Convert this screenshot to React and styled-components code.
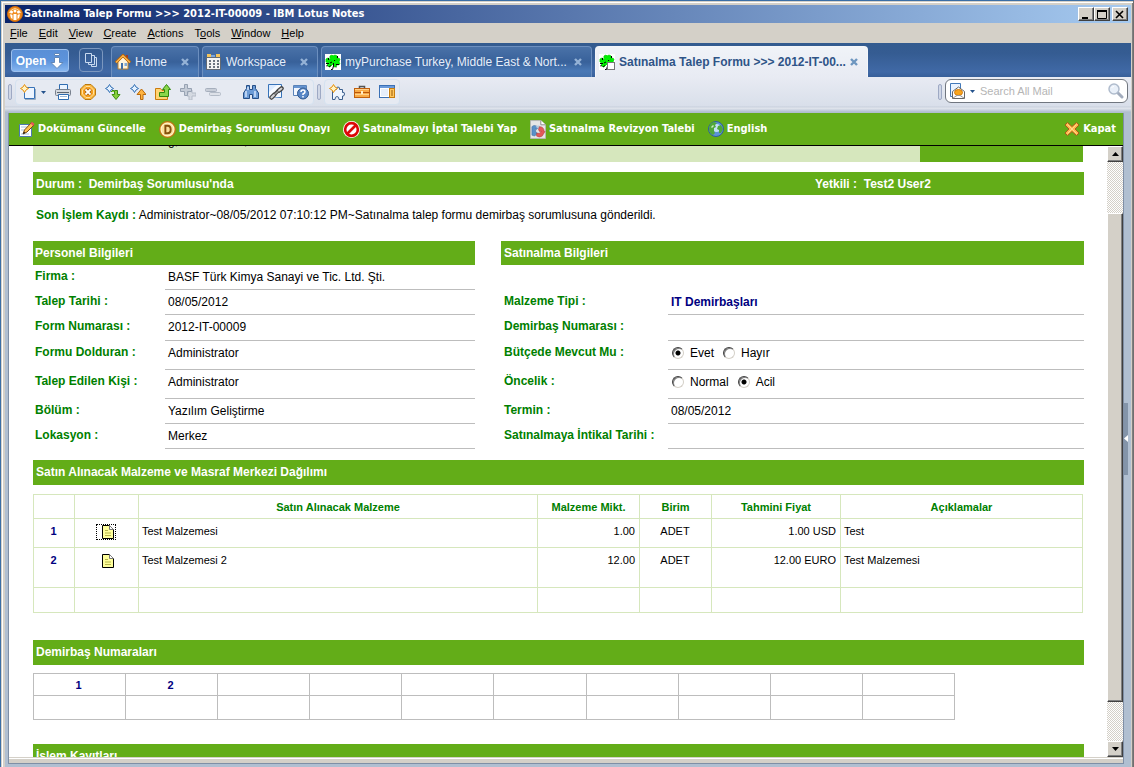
import { useState } from "react";
import styled, { createGlobalStyle, css } from "styled-components";

const materials = [
	{ no: 1, name: "Test Malzemesi", amount: "1.00", unit: "ADET", price: "1.00 USD", note: "Test" },
	{ no: 2, name: "Test Malzemesi 2", amount: "12.00", unit: "ADET", price: "12.00 EURO", note: "Test Malzemesi" },
];

const personnel = [
	["Firma :", "BASF Türk Kimya Sanayi ve Tic. Ltd. Şti.", 25],
	["Talep Tarihi :", "08/05/2012", 25],
	["Form Numarası :", "2012-IT-00009", 26],
	["Formu Dolduran :", "Administrator", 29],
	["Talep Edilen Kişi :", "Administrator", 29],
	["Bölüm :", "Yazılım Geliştirme", 25],
	["Lokasyon :", "Merkez", 25],
];

const menus = [
	["", "F", "ile"],
	["", "E", "dit"],
	["", "V", "iew"],
	["", "C", "reate"],
	["", "A", "ctions"],
	["T", "o", "ols"],
	["", "W", "indow"],
	["", "H", "elp"],
];

function Icon({ size = 16, children }) {
	return (
		<svg width={size} height={size} viewBox="0 0 16 16" aria-hidden="true">
			{children}
		</svg>
	);
}

const Sparkle = ({ x = 0, y = 0, fill = "#fff3c4", stroke = "#e8920c" }) => (
	<path
		d={`M${x + 4.5} ${y + 0.5}L${x + 6} ${y + 3}L${x + 8.5} ${y + 4.5}L${x + 6} ${y + 6}L${x + 4.5} ${y + 8.5}L${x + 3} ${y + 6}L${x + 0.5} ${y + 4.5}L${x + 3} ${y + 3}Z`}
		fill={fill}
		stroke={stroke}
	/>
);

const NotesLogo = () => (
	<Icon>
		<circle cx="8" cy="8" r="7.5" fill="#f08a1c" stroke="#c96a10" />
		<path d="M2 7Q4 3 8 2.500Q12 3 14 7" fill="none" stroke="#ffd79a" />
		<circle cx="4.500" cy="6" r="1.500" fill="#fff" />
		<circle cx="8" cy="5" r="1.500" fill="#fff" />
		<circle cx="11.500" cy="6" r="1.500" fill="#fff" />
		<path d="M3 8.500Q4 8 5.500 9V13L4 12ZM6.500 8H9.500V14H6.500ZM13 8.500Q12 8 10.500 9V13L12 12Z" fill="#fff" />
	</Icon>
);

const HomeIcon = () => (
	<Icon>
		<path d="M11 1H13V6H11Z" fill="#a33c22" />
		<path d="M3 8V15H13V8L8 3Z" fill="#fff4dc" stroke="#b98335" />
		<path d="M.8 8.500L8 1.500L15.200 8.500" fill="none" stroke="#b3620c" strokeWidth="3" />
		<path d="M1 8.500L8 1.800L15 8.500" fill="none" stroke="#ffb84a" strokeWidth="1.400" />
		<path d="M6 9H8V15H6Z" fill="#3f6ea8" />
		<path d="M9.500 9H12V12H9.500Z" fill="#7fa9d6" />
	</Icon>
);

const WorkspaceIcon = () => (
	<Icon>
		<path d="M1 0H5V4H1ZM10 0H14V4H10Z" fill="#f3c45b" />
		<path d="M5 1H9V4H5Z" fill="#7aa5dc" />
		<rect x=".5" y="3.500" width="14" height="12" fill="#f4f4f4" stroke="#626a74" />
		<path d="M3 6H5V8H3ZM7 6H9V8H7ZM11 6H13V8H11ZM3 9H5V11H3ZM7 9H9V11H7ZM11 9H13V11H11ZM3 12H5V14H3ZM7 12H9V14H7ZM11 12H13V14H11Z" fill="#6d7580" />
	</Icon>
);

const CloverIcon = ({ sheet }) => (
	<Icon>
		<rect width="16" height="16" fill="#fff" />
		<path
			d="M5 2L7 1L8 2L10 1L12 2L12 5L10 7L13 4L15 5L14 8L15 10L13 11L10 10L12 12L9 13L8 10L6 12L4 13L2 11L4 9L1 8L1 5L3 4L6 6L5 4Z"
			fill="#00f000"
			stroke="#00d400"
			strokeWidth=".8"
		/>
		<path d="M3.500 4V6M1 9.500H4M5 9L7 8M4 13L6 11.500M12.500 2V4M10 6L9 7M14 10.500H11M11 12.500V13.500M2 12.500V11" stroke="#000" />
		<path d="M8.500 9V12L7.500 15.500H6" fill="none" stroke="#000" />
		{sheet && <rect x="8.500" y="8.500" width="7" height="7" fill="#fff" stroke="#777" />}
	</Icon>
);

const PagesIcon = () => (
	<Icon>
		<path d="M2.500 1.500H8.500V10.500H2.500Z M8.500 3.500H11.500V12.500H5.500V10.500M11.500 5.500H13.500V14.500H8.500V12.500" fill="none" stroke="#c9daf0" />
	</Icon>
);

const NewIcon = () => (
	<Icon>
		<path d="M4.500 3.500H14.500V14.500H4.500Z" fill="#eef5ff" stroke="#3873b8" />
		<path d="M15.500 5V15.500H5" fill="none" stroke="#9aacbf" />
		<Sparkle />
	</Icon>
);

const PrinterIcon = () => (
	<Icon>
		<path d="M4.500 6V.500H12.500V6" fill="#eaf3ff" stroke="#2f6cb0" />
		<rect x=".5" y="5.500" width="15" height="6" rx="1" fill="#d5d9df" stroke="#78818e" />
		<path d="M2 8.500H14" stroke="#5c6570" />
		<path d="M3.500 10.500H13.500V15.500H3.500Z" fill="#fff" stroke="#2f6cb0" />
		<path d="M5 12.500H12" stroke="#9db8da" />
	</Icon>
);

const StopIcon = () => (
	<Icon>
		<path d="M5 .500H11L15.500 5V11L11 15.500H5L.500 11V5Z" fill="#fbb83d" stroke="#b97812" />
		<path d="M6 2.500H10L13.500 6V10L10 13.500H6L2.500 10V6Z" fill="#f79f1f" stroke="#ffe0a0" />
		<path d="M5.500 5.500L10.500 10.500M10.500 5.500L5.500 10.500" stroke="#9a5a10" strokeWidth="3.200" />
		<path d="M5.500 5.500L10.500 10.500M10.500 5.500L5.500 10.500" stroke="#fff" strokeWidth="1.800" />
	</Icon>
);

const NextIcon = () => (
	<Icon>
		<Sparkle fill="#e4f1ff" stroke="#316fb5" />
		<path d="M6 8L8 6L10 8M9.500 6.500H12.500V10.500H15L11 15.500L7 10.500H9.500Z" fill="#86cf3c" stroke="#3f8e13" />
	</Icon>
);

const PrevIcon = () => (
	<Icon>
		<Sparkle fill="#e4f1ff" stroke="#316fb5" />
		<path d="M10.500 15.500V10.500H7L11.500 5L16 10.500H13V15.500Z" fill="#ffb340" stroke="#b9690c" />
	</Icon>
);

const FolderUpIcon = () => (
	<Icon>
		<path d="M.500 15.500V4.500H5.500L7 6.500H12.500V15.500Z" fill="#ffd574" stroke="#cc7a0e" />
		<path d="M4.500 12.500V8.500H9.500V5.500H7.500L11.500 .500L15.500 5.500H13.500V12.500Z" fill="#8bd64a" stroke="#31880f" />
	</Icon>
);

const PlusIcon = () => (
	<Icon>
		<path d="M9 6H12V9H16V12H12V16H9V12H7Z" fill="#d5dae2" stroke="#b5bcc8" />
		<path d="M4.500 .500H7.500V4.500H11.500V7.500H7.500V11.500H4.500V7.500H.500V4.500H4.500Z" fill="#c4cbd6" stroke="#97a2b2" />
	</Icon>
);

const MinusIcon = () => (
	<Icon>
		<rect x="4.500" y="8.500" width="11" height="3" rx="1" fill="#dde1e8" stroke="#b3bbc7" />
		<rect x=".5" y="4.500" width="11" height="3" rx="1" fill="#c8ced8" stroke="#a6afbd" />
	</Icon>
);

const BinocularsIcon = () => (
	<Icon>
		<path d="M3.500 1.500H6.500V5.500H9.500V1.500H12.500V4.500L15.500 9V14.500H9.500V10.500H6.500V14.500H.500V9L3.500 4.500Z" fill="#6c9bd6" stroke="#264f87" />
		<path d="M3 7V13M12 7V13M5 3V6" stroke="#d3e5fb" strokeWidth="1.500" />
	</Icon>
);

const LinkIcon = () => (
	<Icon>
		<path d="M.500 .500H13.500V13.500H.500Z" fill="#dcebff" stroke="#3873b8" />
		<path d="M1 14V8L9 1H13V13Z" fill="#f6faff" />
		<g fill="none" strokeLinecap="round">
			<path d="M3.500 13.500L6 11M11 6.500L13.500 4.500" stroke="#444" strokeWidth="4.500" />
			<path d="M6.500 10.500L10 7" stroke="#444" strokeWidth="3.500" />
			<path d="M3.500 13.500L6 11M11 6.500L13.500 4.500" stroke="#d4d4d4" strokeWidth="2" />
			<path d="M7 10L10 7.500" stroke="#999" strokeWidth="1.500" />
		</g>
	</Icon>
);

const HelpIcon = () => (
	<Icon>
		<path d="M.500 1.500H13.500V11.500H.500Z" fill="#f2f7ff" stroke="#5a83b8" />
		<path d="M1 2H13V4H1Z" fill="#6795d1" />
		<circle cx="10" cy="9.500" r="5.500" fill="#5786c6" stroke="#31598f" />
		<path d="M8 8Q8 6 10 6T12 8Q12 9 10 10V11M10 12V13.500" fill="none" stroke="#fff" strokeWidth="1.500" />
	</Icon>
);

const PuzzleIcon = () => (
	<Icon>
		<path d="M3.500 6V15.500H6Q6 12.500 8 12.500T10 15.500H13.500V12Q15.500 12.500 15.500 10T13.500 8.500V5.500H10.500Q11 3 9 3T7.500 5.500Z" fill="#eff6ff" stroke="#3b5f8e" />
		<Sparkle />
	</Icon>
);

const CaseIcon = () => (
	<Icon>
		<path d="M5.500 5V2.500H10.500V5" fill="none" stroke="#555" strokeWidth="1.500" />
		<rect x=".5" y="4.500" width="15" height="9" fill="#f9ab45" stroke="#c0600e" />
		<path d="M1 5.500H15M1 10.500H15" stroke="#ffd08a" />
		<path d="M1 8.500H15" stroke="#b9560a" />
		<path d="M7 7H9V10H7Z" fill="#fff0c8" />
	</Icon>
);

const PanelIcon = () => (
	<Icon>
		<rect x=".5" y="1.500" width="15" height="12" fill="#fff" stroke="#3a70b5" />
		<path d="M1 2H15V4H1Z" fill="#6b9bdb" />
		<rect x="10.500" y="4.500" width="5" height="9" fill="#ffc75e" stroke="#c67d10" />
		<path d="M12 7H14M12 9H14M12 11H14" stroke="#9a5c08" />
		<path d="M2 5H9V12H2Z" fill="#e6eefa" />
	</Icon>
);

const MailIcon = () => (
	<Icon>
		<path d="M1.500 .500H11.500V13.500H1.500Z" fill="#eaf3ff" stroke="#4379b9" />
		<path d="M3.500 8.500L9.500 4L15.500 8.500V15.500H3.500Z" fill="#fff" stroke="#666" />
		<ellipse cx="9.500" cy="9.500" rx="4" ry="3" fill="#f8a51e" stroke="#d27a0c" />
		<path d="M4 15L8 12.500H11L15 15" fill="none" stroke="#999" />
	</Icon>
);

const MagnifierIcon = () => (
	<Icon>
		<path d="M9.500 9.500L14 14" stroke="#a2acbd" strokeWidth="3" strokeLinecap="round" />
		<circle cx="6" cy="6" r="5" fill="#e9f0f9" stroke="#b0bccd" strokeWidth="1.500" />
		<path d="M3.500 5Q4 3.500 6 3.500" fill="none" stroke="#fff" />
	</Icon>
);

const EditIcon = () => (
	<Icon>
		<path d="M.500 3.500H12.500V15.500H.500Z" fill="#fff" stroke="#4c79ad" />
		<path d="M2 6H9M2 9H6M2 13H10" stroke="#a9c3e0" />
		<path d="M4 13L5.500 9L12.500 1.500L15 4L8 11Z" fill="#ffc24f" stroke="#7b4a12" />
		<path d="M11.500 2.500L13 .800L15.500 3L14 5Z" fill="#e8555a" />
		<path d="M4 13L5 10.500L6.500 12Z" fill="#222" />
	</Icon>
);

const DIcon = () => (
	<Icon size={17}>
		<circle cx="8" cy="8" r="7.500" fill="#e9a530" stroke="#b0741a" />
		<circle cx="8" cy="8" r="6" fill="#fbe09a" stroke="#fff3cc" />
		<path d="M6 4.500H8Q11 4.500 11 8T8 11.500H6Z" fill="none" stroke="#84500c" strokeWidth="1.800" />
	</Icon>
);

const ForbiddenIcon = () => (
	<Icon size={17}>
		<circle cx="8" cy="8" r="8" fill="#fff" />
		<circle cx="8" cy="8" r="6" fill="#fff" stroke="#dc0808" strokeWidth="2.500" />
		<path d="M12 4L4 12" stroke="#dc0808" strokeWidth="2.500" />
	</Icon>
);

const RevisionIcon = () => (
	<svg width="16" height="19" viewBox="0 0 17 20" aria-hidden="true">
		<path d="M.500 .500H11.500L16.500 5V19.500H.500Z" fill="#e6e6e6" stroke="#b5b5b5" />
		<path d="M11.500 .500V5H16.500" fill="#fff" stroke="#888" />
		<path d="M2 16V7Q5 4 9 8L7 10L6 9V12L8 14L5 17Z" fill="#5a90c8" stroke="#34649b" strokeWidth=".5" />
		<path d="M6 7Q10 4 12 8L10 10Z" fill="#b4c8dd" />
		<path d="M10 7Q15 7 15 12L16 12L13 17Q10 19 7 17L7 14L10 14L12 12L10 12L9 10Z" fill="#e25a5a" stroke="#aa2f2f" strokeWidth=".5" />
	</svg>
);

const GlobeIcon = () => (
	<Icon>
		<circle cx="8" cy="8" r="7.500" fill="#5d93d6" stroke="#2f5f9a" />
		<circle cx="8.500" cy="7" r="4" fill="#c3e0f8" />
		<path d="M1 8Q1 2 6 1L9 2L7 4L8 6L6 7L6 10L7 12L5 14Q1 12 1 8ZM10 5L13 4L15 8L13 12L11 12L11 9L9 8Z" fill="#4fa83a" />
		<path d="M3 6L5 4L6 5L4 7Z" fill="#cdebc0" />
	</Icon>
);

const CloseIcon = () => (
	<Icon>
		<path d="M3.500 1.500L8 5.500L12.500 1.500L15 4L11 8L15 12L12.500 14.500L8 10.500L3.500 14.500L1 12L5 8L1 4Z" fill="#ffb84c" stroke="#a85b1a" />
		<path d="M3.500 3.500L12.500 12.500M12.500 3.500L3.500 12.500" stroke="#ffd98c" />
	</Icon>
);

const NoteIcon = () => (
	<svg width="12" height="14" viewBox="0 0 12 14" aria-hidden="true">
		<path d="M.500 .500H7.500L11.500 4.500V13.500H.500Z" fill="#ffff9c" stroke="#000" />
		<path d="M7.500 .500V4.500H11.500" fill="#fff" stroke="#777" />
		<path d="M3 5.500H6M3 8H9M3 10.500H9" stroke="#b5b54a" />
	</svg>
);

const CrossIcon = () => (
	<svg width="8" height="8" viewBox="0 0 8 8" aria-hidden="true">
		<path d="M1 1L7 7M7 1L1 7" stroke="currentColor" strokeWidth="2.400" />
	</svg>
);

const Triangle = ({ up, small }) => (
	<svg width={small ? 5 : 7} height={small ? 3 : 4} viewBox="0 0 7 4" aria-hidden="true">
		<path d={up ? "M0 4L3.500 0L7 4Z" : "M0 0L3.500 4L7 0Z"} fill="currentColor" />
	</svg>
);

function Tab({ icon, title, active, width }) {
	return (
		<TabBox $active={active} $width={width}>
			<TabLink href="#">
				{icon}
				<span>{title}</span>
			</TabLink>
			<TabClose aria-label={`Close ${title}`}>
				<CrossIcon />
			</TabClose>
		</TabBox>
	);
}

function RadioField({ name, options, value, onChange }) {
	return options.map((option) => (
		<RadioLabel key={option}>
			<Radio type="radio" name={name} checked={value === option} onChange={() => onChange(option)} />
			{option}
		</RadioLabel>
	));
}

function App() {
	const [inBudget, setInBudget] = useState("Evet");
	const [priority, setPriority] = useState("Acil");
	const [search, setSearch] = useState("");

	const purchase = [
		["Malzeme Tipi :", <Strong>IT Demirbaşları</Strong>, 25],
		["Demirbaş Numarası :", "", 26],
		[
			"Bütçede Mevcut Mu :",
			<RadioField name="budget" options={["Evet", "Hayır"]} value={inBudget} onChange={setInBudget} />,
			29,
		],
		[
			"Öncelik :",
			<RadioField name="priority" options={["Normal", "Acil"]} value={priority} onChange={setPriority} />,
			29,
		],
		["Termin :", "08/05/2012", 25],
		["Satınalmaya İntikal Tarihi :", "", 25],
	];

	return (
		<>
			<GlobalStyle />
			<Window>
				<TitleBar>
					<NotesLogo />
					<Title>Satınalma Talep Formu &gt;&gt;&gt; 2012-IT-00009 - IBM Lotus Notes</Title>
					<WindowButton aria-label="Minimize">
						<svg width="10" height="9">
							<path d="M1 7H7V9H1Z" />
						</svg>
					</WindowButton>
					<WindowButton aria-label="Maximize">
						<svg width="10" height="9">
							<path d="M.500 1H9.500V8.500H.500Z" fill="none" stroke="#000" />
							<path d="M0 0H10V2H0Z" />
						</svg>
					</WindowButton>
					<WindowButton aria-label="Close" $apart>
						<svg width="10" height="9">
							<path d="M1 1L8 8M8 1L1 8" stroke="#000" strokeWidth="1.600" />
						</svg>
					</WindowButton>
				</TitleBar>

				<MenuBar>
					{menus.map(([before, key, after]) => (
						<MenuItem key={before + key + after}>
							{before}
							<u>{key}</u>
							{after}
						</MenuItem>
					))}
				</MenuBar>

				<TabBar>
					<OpenButton>
						Open
						<svg width="14" height="16" viewBox="0 0 14 16" aria-hidden="true">
							<path d="M4.500 .500H9.500V2.500H4.500ZM4.500 4.500H9.500V9.500H13L7 15.500L1 9.500H4.500Z" fill="#fff" stroke="#5f86b8" />
						</svg>
					</OpenButton>
					<PagesButton aria-label="Thumbnails">
						<PagesIcon />
					</PagesButton>
					<Tab icon={<HomeIcon />} title="Home" width={88} />
					<Tab icon={<WorkspaceIcon />} title="Workspace" width={116} />
					<Tab icon={<CloverIcon />} title="myPurchase Turkey, Middle East & Nort..." width={271} />
					<Tab icon={<CloverIcon sheet />} title="Satınalma Talep Formu >>> 2012-IT-00..." width={273} active />
				</TabBar>

				<ToolBar>
					<Grip />
					<ToolGroup>
						<ToolButton aria-label="New"><NewIcon /></ToolButton>
						<ToolArrow aria-label="New options"><Triangle small /></ToolArrow>
						<ToolButton aria-label="Print"><PrinterIcon /></ToolButton>
						<ToolButton aria-label="Stop"><StopIcon /></ToolButton>
						<ToolButton aria-label="Next unread"><NextIcon /></ToolButton>
						<ToolButton aria-label="Previous unread"><PrevIcon /></ToolButton>
						<ToolButton aria-label="Move up"><FolderUpIcon /></ToolButton>
						<ToolButton aria-label="Expand all"><PlusIcon /></ToolButton>
						<ToolButton aria-label="Collapse all"><MinusIcon /></ToolButton>
						<ToolSpace />
						<ToolButton aria-label="Find"><BinocularsIcon /></ToolButton>
						<ToolButton aria-label="Copy link"><LinkIcon /></ToolButton>
						<ToolButton aria-label="Help"><HelpIcon /></ToolButton>
					</ToolGroup>
					<Grip />
					<ToolGroup>
						<ToolButton aria-label="Widgets"><PuzzleIcon /></ToolButton>
						<ToolButton aria-label="Toolbox"><CaseIcon /></ToolButton>
						<ToolButton aria-label="Side panel"><PanelIcon /></ToolButton>
					</ToolGroup>
					<Spacer />
					<Grip />
					<SearchBox>
						<ToolButton aria-label="Search scope"><MailIcon /></ToolButton>
						<Triangle small />
						<SearchInput
							aria-label="Search All Mail"
							placeholder="Search All Mail"
							value={search}
							onChange={(e) => setSearch(e.target.value)}
						/>
						<ToolButton aria-label="Search"><MagnifierIcon /></ToolButton>
					</SearchBox>
				</ToolBar>

				<Workspace>
					<DocumentFrame>
						<ActionBar>
							<Action><EditIcon />Dokümanı Güncelle</Action>
							<Action><DIcon />Demirbaş Sorumlusu Onayı</Action>
							<Action><ForbiddenIcon />Satınalmayı İptal Talebi Yap</Action>
							<Action><RevisionIcon />Satınalma Revizyon Talebi</Action>
							<Action><GlobeIcon />English</Action>
							<Spacer />
							<Action><CloseIcon />Kapat</Action>
						</ActionBar>

						<Viewport>
							<Page>
								<Banner>
									<BannerText>
										<span>g,</span>
										<span>,</span>
									</BannerText>
									<BannerLogo />
								</Banner>

								<StatusBar>
									<span>Durum :&nbsp; Demirbaş Sorumlusu'nda</span>
									<Owner>Yetkili :&nbsp; Test2 User2</Owner>
								</StatusBar>

								<LastAction>
									<Label>Son İşlem Kaydı :</Label> Administrator~08/05/2012 07:10:12 PM~Satınalma talep formu
									demirbaş sorumlusuna gönderildi.
								</LastAction>

								<Columns>
									<section>
										<SectionTitle $tight>Personel Bilgileri</SectionTitle>
										<Fields>
											{personnel.map(([label, value, height]) => (
												<Field key={label} $labelWidth={132} $height={height}>
													<Label as="dt">{label}</Label>
													<Value>{value}</Value>
												</Field>
											))}
										</Fields>
									</section>
									<section>
										<SectionTitle>Satınalma Bilgileri</SectionTitle>
										<Fields $offset>
											{purchase.map(([label, value, height]) => (
												<Field key={label} $labelWidth={167} $height={height} $indent>
													<Label as="dt">{label}</Label>
													<Value>{value}</Value>
												</Field>
											))}
										</Fields>
									</section>
								</Columns>

								<SectionTitle $wide>Satın Alınacak Malzeme ve Masraf Merkezi Dağılımı</SectionTitle>
								<MaterialTable>
									<colgroup>
										<Col $width={41} />
										<Col $width={64} />
										<col />
										<Col $width={102} />
										<Col $width={72} />
										<Col $width={129} />
										<Col $width={242} />
									</colgroup>
									<thead>
										<tr>
											<th />
											<th />
											<th>Satın Alınacak Malzeme</th>
											<th>Malzeme Mikt.</th>
											<th>Birim</th>
											<th>Tahmini Fiyat</th>
											<th>Açıklamalar</th>
										</tr>
									</thead>
									<tbody>
										{materials.map((item) => (
											<MaterialRow key={item.no} $height={item.no === 1 ? 29 : 40}>
												<Cell $align="center"><Strong>{item.no}</Strong></Cell>
												<Cell $align="center">
													<NoteLink href="#" aria-label={item.name} $focused={item.no === 1}>
														<NoteIcon />
													</NoteLink>
												</Cell>
												<Cell>{item.name}</Cell>
												<Cell $align="right">{item.amount}</Cell>
												<Cell $align="center">{item.unit}</Cell>
												<Cell $align="right">{item.price}</Cell>
												<Cell>{item.note}</Cell>
											</MaterialRow>
										))}
										<MaterialRow $height={25}>
											{Array.from({ length: 7 }, (_, i) => (
												<Cell key={i} />
											))}
										</MaterialRow>
									</tbody>
								</MaterialTable>

								<SectionTitle $wide>Demirbaş Numaraları</SectionTitle>
								<NumberTable>
									<tbody>
										<MaterialRow $height={22}>
											{Array.from({ length: 10 }, (_, i) => (
												<NumberCell key={i}>{i < 2 ? i + 1 : ""}</NumberCell>
											))}
										</MaterialRow>
										<MaterialRow $height={24}>
											{Array.from({ length: 10 }, (_, i) => (
												<NumberCell key={i} />
											))}
										</MaterialRow>
									</tbody>
								</NumberTable>

								<SectionTitle $wide>İşlem Kayıtları</SectionTitle>
							</Page>

							<ScrollBar>
								<ScrollButton aria-label="Scroll up"><Triangle up /></ScrollButton>
								<Track $grow={51} />
								<Thumb $grow={489} />
								<Track $grow={39} />
								<ScrollButton aria-label="Scroll down"><Triangle /></ScrollButton>
							</ScrollBar>
						</Viewport>
						<BottomEdge />
					</DocumentFrame>
					<SideStrip>
						<SideHandle aria-label="Open side bar">
							<svg width="4" height="7">
								<path d="M4 0V7L0 3.500Z" fill="#fff" />
							</svg>
						</SideHandle>
					</SideStrip>
				</Workspace>
			</Window>
		</>
	);
}

export default App;

const GlobalStyle = createGlobalStyle`
	* {
		box-sizing: border-box;
	}

	body {
		margin: 0;
		background-color: #d4d0c8;
		font-family: "Liberation Sans", Arial, sans-serif;
		font-size: 12px;
		line-height: 16px;
		color: #000;
	}

	button {
		padding: 0;
		border: none;
		background: none;
		font: inherit;
		color: inherit;
	}

	svg {
		display: block;
		flex-shrink: 0;
	}
`;

const raised = css`
	background-color: #d4d0c8;
	border: 1px solid;
	border-color: #fff #404040 #404040 #fff;
	box-shadow: inset -1px -1px 0 #808080;
`;

const Window = styled.div`
	height: 100vh;
	display: flex;
	flex-direction: column;
	padding: 2px 2px 0 2px;
	border-top: 1px solid #3a6ea5;
	border-left: 1px solid #3a6ea5;
	border-right: 1px solid #707070;
	box-shadow: inset 1px 1px 0 #d4d0c8, inset 2px 2px 0 #fff, inset -1px 0 0 #808080;
	overflow: hidden;

	> * {
		margin-left: 2px;
		flex-shrink: 0;
	}

	> :first-child {
		margin-top: 2px;
	}
`;

const TitleBar = styled.header`
	height: 18px;
	display: flex;
	align-items: center;
	padding: 0 3px 0 2px;
	background: linear-gradient(to right, #0a246a, #a6caf0);
	color: #fff;
`;

const Title = styled.h1`
	flex: 1;
	margin: 0 0 0 1px;
	font-family: "DejaVu Sans Condensed", Tahoma, sans-serif;
	font-size: 11px;
	font-weight: bold;
	line-height: 18px;
	white-space: nowrap;
`;

const WindowButton = styled.button`
	${raised}
	width: 16px;
	height: 14px;
	display: flex;
	align-items: center;
	justify-content: center;
	margin-left: ${(props) => (props.$apart ? "2px" : "0")};
`;

const MenuBar = styled.nav`
	height: 20px;
	display: flex;
	align-items: center;
	gap: 11px;
	padding-left: 5px;
	background-color: #d4d0c8;
`;

const MenuItem = styled.button`
	font-size: 11px;
	text-underline-offset: 1px;
`;

const TabBar = styled.nav`
	height: 34px;
	display: flex;
	align-items: flex-end;
	gap: 3px;
	padding-left: 6px;
	background: linear-gradient(#335b8f, #355c92 30%, #4069a6 85%, #375f99);
`;

const OpenButton = styled.button`
	width: 58px;
	height: 23px;
	display: flex;
	align-items: center;
	justify-content: center;
	gap: 4px;
	margin: 0 7px 5px 0;
	border: 1px solid #9cc0ee;
	border-radius: 3px;
	background: linear-gradient(#5a8fd6, #5c93dc 50%, #86b6f0);
	color: #fff;
	font-size: 12px;
	font-weight: bold;
`;

const PagesButton = styled.button`
	width: 24px;
	height: 24px;
	display: flex;
	align-items: center;
	justify-content: center;
	margin: 0 5px 5px 0;
	border: 1px solid #7b97bf;
	border-radius: 4px;
`;

const TabBox = styled.div`
	width: ${(props) => props.$width}px;
	height: 31px;
	display: flex;
	align-items: center;
	justify-content: space-between;
	padding: 0 9px 0 3px;
	border: 1px solid #6c8fbf;
	border-bottom: none;
	border-radius: 4px 4px 0 0;
	background: linear-gradient(#4a72a8, #38619a 50%, #4a79b6 80%, #4471ad);
	color: #94b2d6;

	${(props) =>
		props.$active &&
		css`
			border-color: #f4f6fa;
			background: linear-gradient(#f0f3f8, #e8ebf3);
			color: #6d96bf;
		`}

	a {
		color: ${(props) => (props.$active ? "#2f5487" : "#e6eefa")};
		font-weight: ${(props) => (props.$active ? "bold" : "normal")};
	}
`;

const TabLink = styled.a`
	display: flex;
	align-items: center;
	gap: 4px;
	text-decoration: none;
	white-space: nowrap;
`;

const TabClose = styled.button`
	flex-shrink: 0;
`;

const ToolBar = styled.div`
	height: 36px;
	display: flex;
	align-items: flex-start;
	gap: 3px;
	padding: 2px 3px 0 3px;
	background: linear-gradient(#e8ebf3, #d9dfea 29px, #c6cedb 30px, #e4e8ef 31px, #b0bece 35px);
`;

const Grip = styled.div`
	width: 4px;
	height: 16px;
	margin: 5px 0 0;
	border: 1px solid #9ea9c4;
	border-radius: 2px;
	background-color: #d0d7e6;
`;

const ToolGroup = styled.div`
	height: 26px;
	display: flex;
	align-items: center;
	gap: 9px;
	padding: 0 4px;
	border: 1px solid #d5e2f0;
	border-radius: 4px;
	background-color: #e6eaf2;
`;

const ToolButton = styled.button`
	flex-shrink: 0;
`;

const ToolArrow = styled.button`
	margin: 0 0 0 -4px;
	color: #24528c;
`;

const ToolSpace = styled.span`
	width: 4px;
`;

const Spacer = styled.span`
	flex: 1;
`;

const SearchBox = styled.div`
	width: 183px;
	height: 24px;
	display: flex;
	align-items: center;
	gap: 5px;
	padding: 0 3px;
	border: 1px solid #70767f;
	border-radius: 6px;
	background-color: #fff;
	color: #24528c;
`;

const SearchInput = styled.input`
	flex: 1;
	min-width: 0;
	padding: 0;
	border: none;
	outline: none;
	font-family: inherit;
	font-size: 11px;

	&::placeholder {
		color: #b5b5b5;
	}
`;

const Workspace = styled.div`
	flex: 1;
	min-height: 0;
	display: flex;
	padding: 0 0 3px 3px;
	background-color: #b0bfd1;
`;

const DocumentFrame = styled.main`
	flex: 1;
	min-width: 0;
	display: flex;
	flex-direction: column;
	border: 1px solid #7f8fa6;
	border-top: none;
	background-color: #fff;
`;

const ActionBar = styled.div`
	height: 33px;
	flex-shrink: 0;
	display: flex;
	align-items: center;
	gap: 13px;
	padding: 0 7px 0 10px;
	border-bottom: 1px solid #000;
	background-color: #63ad18;
`;

const Action = styled.button`
	display: flex;
	align-items: center;
	gap: 3px;
	color: #fff;
	font-family: "DejaVu Sans Condensed", Tahoma, sans-serif;
	font-size: 11px;
	font-weight: bold;
	white-space: nowrap;
`;

const Viewport = styled.div`
	flex: 1;
	min-height: 0;
	display: flex;
	overflow: hidden;
`;

const Page = styled.div`
	flex: 1;
	min-width: 0;
	padding: 0 23px 0 24px;
`;

const Banner = styled.div`
	height: 16px;
	display: grid;
	grid-template-columns: 887fr 163fr;
	margin: 0 1px 10px 0;
	overflow: hidden;
`;

const BannerText = styled.div`
	display: flex;
	gap: 66px;
	padding-left: 135px;
	background-color: #d6e7bd;

	span {
		margin-top: -13px;
	}
`;

const BannerLogo = styled.div`
	background-color: #63ad18;
`;

const StatusBar = styled.div`
	height: 23px;
	display: flex;
	align-items: center;
	justify-content: space-between;
	padding-left: 3px;
	background-color: #63ad18;
	color: #fff;
	font-weight: bold;
`;

const Owner = styled.span`
	width: 269px;
`;

const LastAction = styled.p`
	margin: 12px 0 18px;
	padding-left: 3px;
`;

const Columns = styled.div`
	display: grid;
	grid-template-columns: 442fr 583fr;
	gap: 26px;
	margin-bottom: 11px;
`;

const SectionTitle = styled.h2`
	height: ${(props) => (props.$wide ? "25px" : "24px")};
	margin: 0;
	padding-left: ${(props) => (props.$tight ? "2px" : "3px")};
	background-color: #63ad18;
	color: #fff;
	font-size: 12px;
	font-weight: bold;
	line-height: ${(props) => (props.$wide ? "25px" : "24px")};
`;

const Fields = styled.dl`
	margin: 0;
	padding-top: ${(props) => (props.$offset ? "25px" : "0")};
`;

const Field = styled.div`
	height: ${(props) => props.$height}px;
	display: grid;
	grid-template-columns: ${(props) => props.$labelWidth}px 1fr;

	dt {
		padding: 3px 0 0 ${(props) => (props.$indent ? "3px" : "2px")};
	}
`;

const Label = styled.strong`
	color: #008000;
	font-weight: bold;
`;

const Value = styled.dd`
	display: flex;
	margin: 0;
	padding: 4px 0 0 3px;
	border-bottom: 1px solid #bdbdbd;
`;

const Strong = styled.strong`
	color: #000080;
`;

const RadioLabel = styled.label`
	display: flex;
	align-items: center;
	height: 16px;
	margin-right: 8px;
`;

const Radio = styled.input`
	appearance: none;
	width: 12px;
	height: 12px;
	margin: 0 6px 0 1px;
	border: 1px solid;
	border-color: #404040 #d4d0c8 #d4d0c8 #404040;
	border-radius: 50%;
	background-color: #fff;
	box-shadow: inset 1px 1px 0 #808080;

	&:checked {
		background-image: radial-gradient(circle, #000 2px, transparent 3px);
	}
`;

const MaterialTable = styled.table`
	width: calc(100% - 1px);
	margin: 9px 0 27px;
	border-collapse: collapse;
	table-layout: fixed;
	font-size: 11px;

	th,
	td {
		border: 1px solid #d6e7bd;
	}

	th {
		height: 24px;
		padding: 0;
		color: #008000;
	}
`;

const Col = styled.col`
	width: ${(props) => props.$width}px;
`;

const MaterialRow = styled.tr`
	height: ${(props) => props.$height}px;
`;

const Cell = styled.td`
	padding: 4px 4px 0 3px;
	text-align: ${(props) => props.$align || "left"};
	vertical-align: top;
`;

const NoteLink = styled.a`
	width: 18px;
	display: inline-flex;
	justify-content: flex-end;
	margin-top: 2px;
	padding-right: 1px;
	vertical-align: top;
	outline: ${(props) => (props.$focused ? "1px dotted #000" : "none")};
`;

const NumberTable = styled.table`
	width: 922px;
	max-width: 100%;
	margin: 8px 0 24px;
	border-collapse: collapse;
	table-layout: fixed;
	font-size: 11px;
`;

const NumberCell = styled.td`
	padding: 0 2px 0 0;
	border: 1px solid #bdbdbd;
	color: #000080;
	font-weight: bold;
	text-align: center;
`;

const ScrollBar = styled.div`
	width: 16px;
	flex-shrink: 0;
	display: flex;
	flex-direction: column;
`;

const ScrollButton = styled.button`
	${raised}
	height: 16px;
	display: flex;
	align-items: center;
	justify-content: center;
`;

const Track = styled.div`
	flex: ${(props) => props.$grow};
	background: repeating-conic-gradient(#d4d0c8 0 25%, #fff 0 50%) 0 0 / 2px 2px;
`;

const Thumb = styled.div`
	${raised}
	flex: ${(props) => props.$grow};
`;

const BottomEdge = styled.div`
	height: 6px;
	flex-shrink: 0;
	border-top: 1px solid #d4d0c8;
	background-color: #d4d0c8;
	box-shadow: inset 0 1px 0 #fff;
`;

const SideStrip = styled.aside`
	width: 7px;
	display: flex;
	flex-direction: column;
	justify-content: center;
`;

const SideHandle = styled.button`
	width: 4px;
	height: 72px;
	background-color: #8394a9;

	svg {
		margin: auto 0;
	}
`;
